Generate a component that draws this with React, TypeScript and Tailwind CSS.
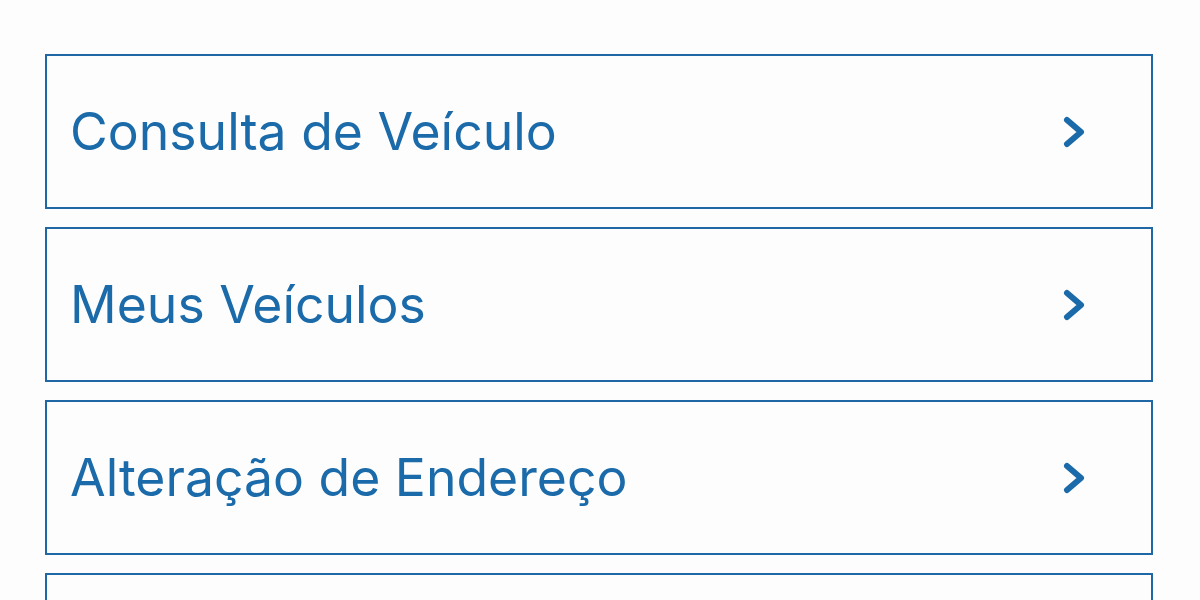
const items = ["Consulta de Veículo", "Meus Veículos", "Alteração de Endereço", ""]

function Chevron() {
  return (
    <svg width="24" height="34" viewBox="0 0 24 34" fill="none" className="text-[#1b6aa9]">
      <path d="M5 5 L19 17 L5 29" stroke="currentColor" strokeWidth="6" strokeLinecap="round" strokeLinejoin="round" />
    </svg>
  )
}

export default function App() {
  return (
    <div className="w-[1200px] h-[600px] overflow-hidden bg-[#fdfdfd] pt-[54px] pl-[45px] font-['Inter','Roboto',sans-serif]">
      <div className="w-[1108px] flex flex-col gap-[18px]">
        {items.map((item, i) => (
          <div
            key={i}
            className="h-[155px] shrink-0 border-2 border-[#1f68a5] flex items-center justify-between pl-[23px] pr-[65px]"
          >
            <span className="text-[51.7px] font-normal text-[#1b6aa9] leading-none">{item}</span>
            {item && <Chevron />}
          </div>
        ))}
      </div>
    </div>
  )
}
